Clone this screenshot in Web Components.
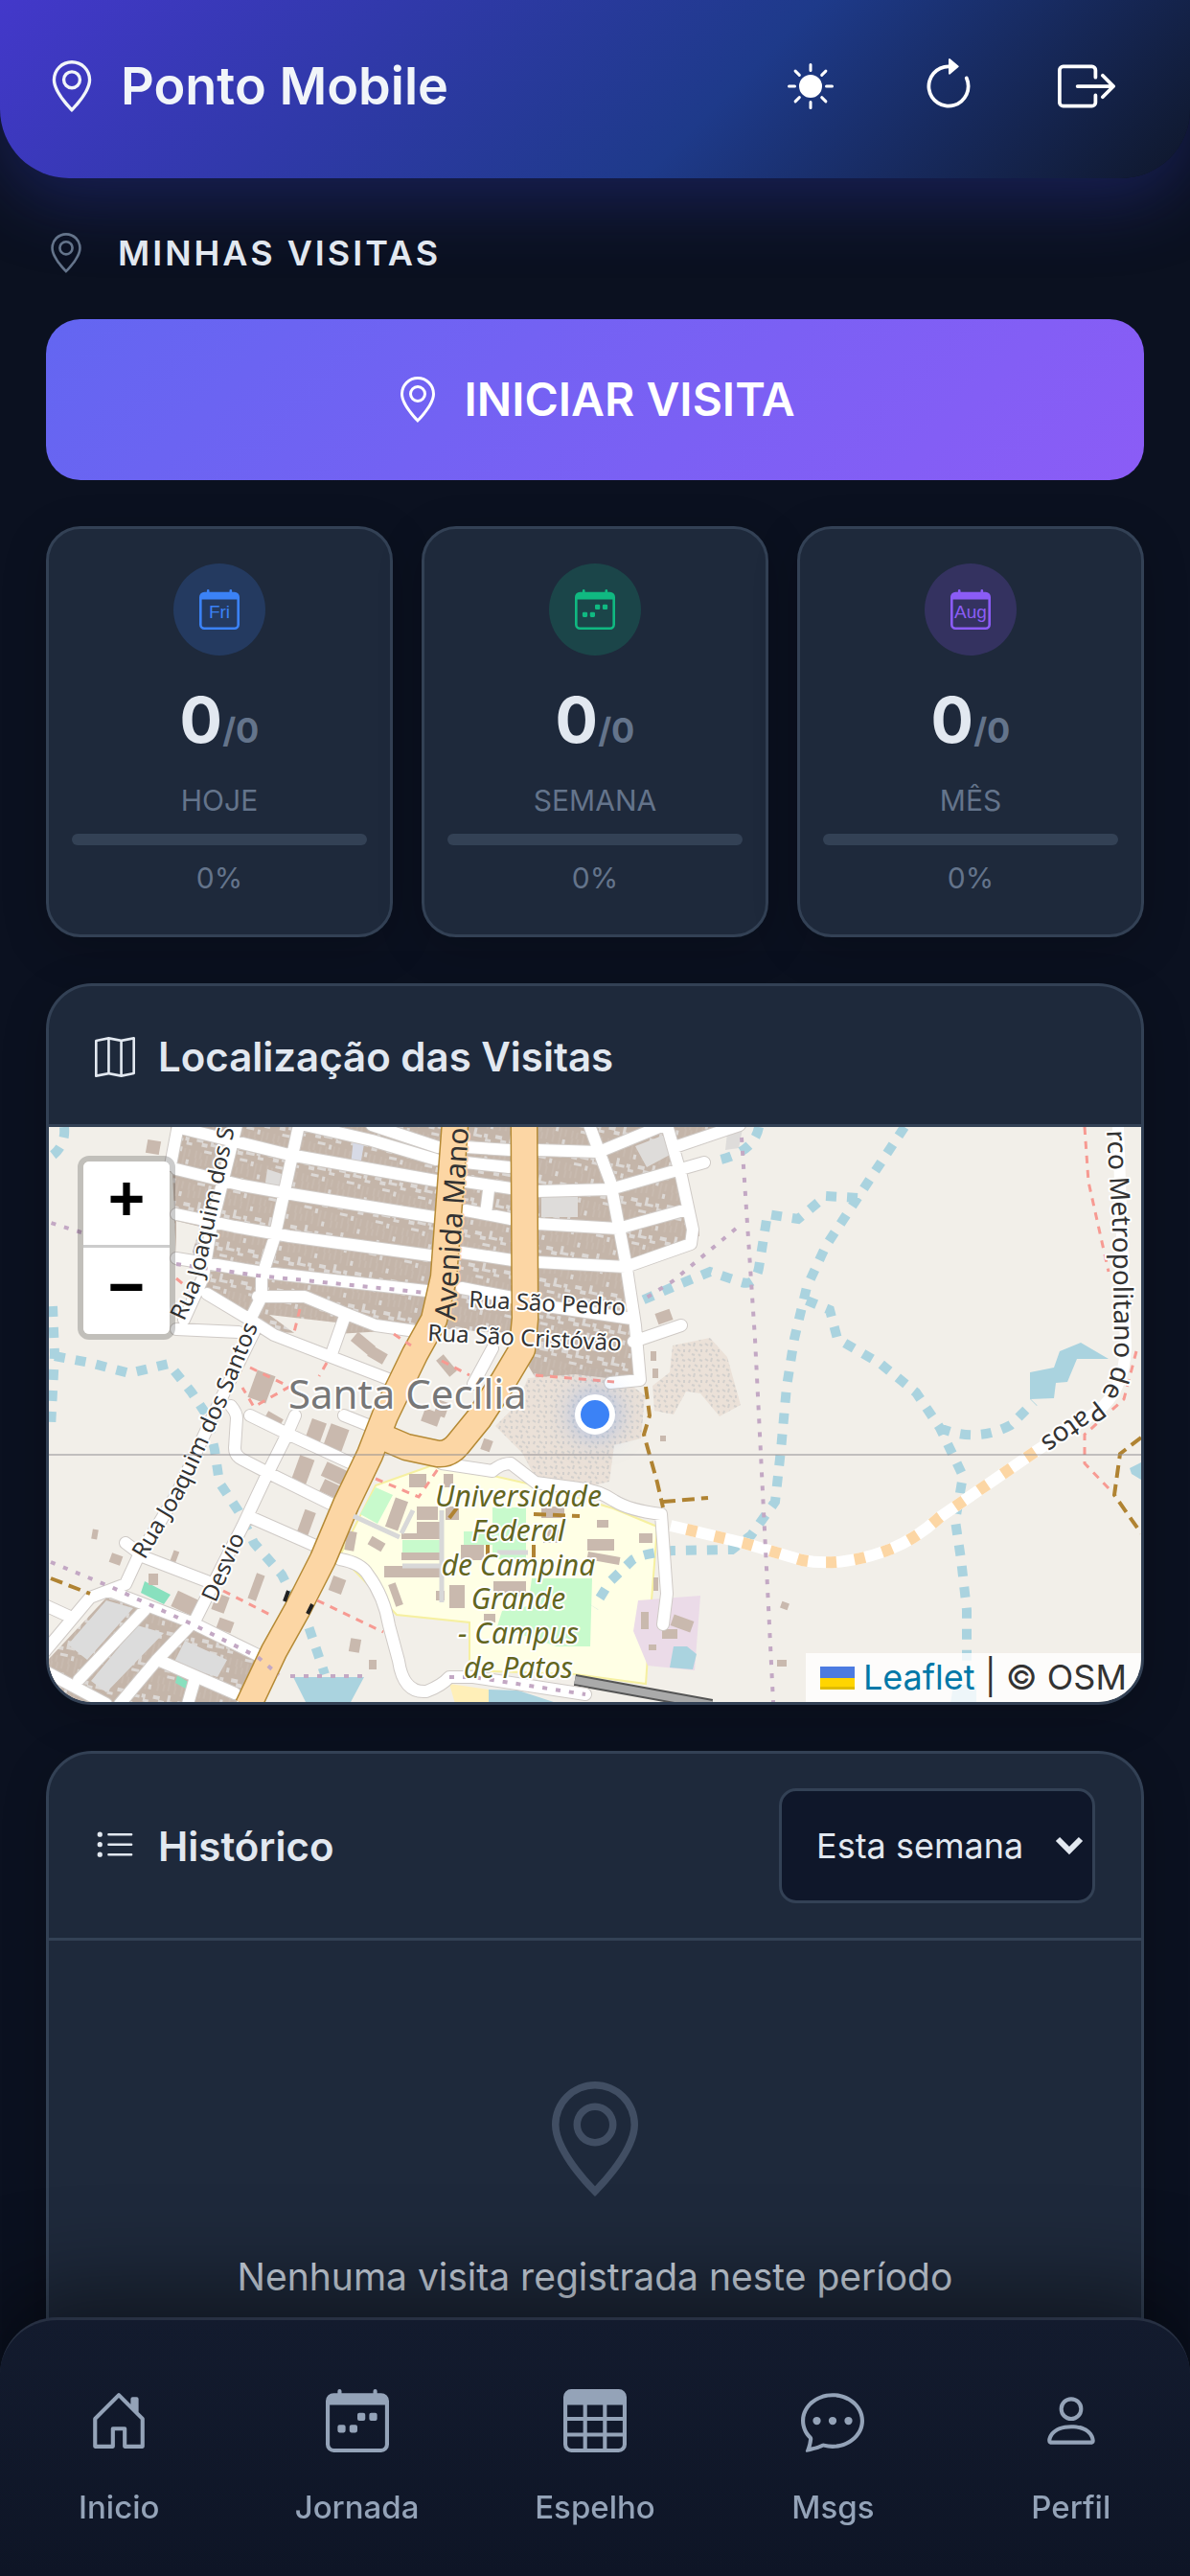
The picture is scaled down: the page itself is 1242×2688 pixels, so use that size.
<!DOCTYPE html>
<html lang="pt-BR">
<head>
<meta charset="utf-8">
<meta name="viewport" content="width=device-width, initial-scale=1">
<title>Ponto Mobile</title>
<style>
    :root {
        --bg: #0b1120;
        --card: #1e293b;
        --line: #334155;
        --text: #e2e8f0;
        --muted: #64748b;
    }
    body {
        margin: 0;
        background: var(--bg);
        color: var(--text);
        font-family: Inter, "Liberation Sans", sans-serif;
        font-size: 36px;
        line-height: 1.5;
        font-optical-sizing: none;
    }
    main {
        display: flex;
        flex-direction: column;
        padding: 51px 48px 117px;
    }
    section-title { margin-bottom: 42px; }
    visit-button, .stats, .map-panel { margin-bottom: 48px; }
    .stats {
        display: grid;
        grid-template-columns: repeat(3, 1fr);
        gap: 30px;
    }
</style>
</head>
<body>

<top-bar>Ponto Mobile</top-bar>

<main>
    <section-title icon="pin">Minhas Visitas</section-title>
    <visit-button>INICIAR VISITA</visit-button>

    <div class="stats">
        <stat-card icon="day" day="Fri" color="#3b82f6" tint="rgba(59,130,246,.2)" label="Hoje"></stat-card>
        <stat-card icon="week" color="#10b981" tint="rgba(16,185,129,.2)" label="Semana"></stat-card>
        <stat-card icon="day" day="Aug" color="#8b5cf6" tint="rgba(139,92,246,.2)" label="Mês"></stat-card>
    </div>

    <panel-card class="map-panel" icon="map">
        <span slot="title">Localização das Visitas</span>
        <visit-map></visit-map>
    </panel-card>

    <panel-card class="history-panel" icon="list">
        <span slot="title">Histórico</span>
        <period-select slot="action"></period-select>
        <empty-state>Nenhuma visita registrada neste período</empty-state>
    </panel-card>
</main>

<bottom-nav>
    <nav-item icon="home">Inicio</nav-item>
    <nav-item icon="week">Jornada</nav-item>
    <nav-item icon="table">Espelho</nav-item>
    <nav-item icon="chat">Msgs</nav-item>
    <nav-item icon="person">Perfil</nav-item>
</bottom-nav>

<script>
const icons = {
    pin: '<path d="M12.166 8.94c-.524 1.062-1.234 2.12-1.96 3.07A31.493 31.493 0 0 1 8 14.58a31.481 31.481 0 0 1-2.206-2.57c-.726-.95-1.436-2.008-1.96-3.07C3.304 7.867 3 6.862 3 6a5 5 0 0 1 10 0c0 .862-.305 1.867-.834 2.94zM8 16s6-5.686 6-10A6 6 0 0 0 2 6c0 4.314 6 10 6 10z"/><path d="M8 8a2 2 0 1 1 0-4 2 2 0 0 1 0 4zm0 1a3 3 0 1 0 0-6 3 3 0 0 0 0 6z"/>',
    sun: '<path d="M8 12a4 4 0 1 0 0-8 4 4 0 0 0 0 8zM8 0a.5.5 0 0 1 .5.5v2a.5.5 0 0 1-1 0v-2A.5.5 0 0 1 8 0zm0 13a.5.5 0 0 1 .5.5v2a.5.5 0 0 1-1 0v-2A.5.5 0 0 1 8 13zm8-5a.5.5 0 0 1-.5.5h-2a.5.5 0 0 1 0-1h2a.5.5 0 0 1 .5.5zM3 8a.5.5 0 0 1-.5.5h-2a.5.5 0 0 1 0-1h2A.5.5 0 0 1 3 8zm10.657-5.657a.5.5 0 0 1 0 .707l-1.414 1.415a.5.5 0 1 1-.707-.708l1.414-1.414a.5.5 0 0 1 .707 0zm-9.193 9.193a.5.5 0 0 1 0 .707L3.05 13.657a.5.5 0 0 1-.707-.707l1.414-1.414a.5.5 0 0 1 .707 0zm9.193 2.121a.5.5 0 0 1-.707 0l-1.414-1.414a.5.5 0 0 1 .707-.707l1.414 1.414a.5.5 0 0 1 0 .707zM4.464 4.465a.5.5 0 0 1-.707 0L2.343 3.05a.5.5 0 1 1 .707-.707l1.414 1.414a.5.5 0 0 1 0 .708z"/>',
    refresh: '<path fill-rule="evenodd" d="M8 3a5 5 0 1 0 4.546 2.914.5.5 0 0 1 .908-.417A6 6 0 1 1 8 2v1z"/><path d="M8 4.466V.534a.25.25 0 0 1 .41-.192l2.36 1.966c.12.1.12.284 0 .384L8.41 4.658A.25.25 0 0 1 8 4.466z"/>',
    logout: '<path fill-rule="evenodd" d="M10 12.5a.5.5 0 0 1-.5.5h-8a.5.5 0 0 1-.5-.5v-9a.5.5 0 0 1 .5-.5h8a.5.5 0 0 1 .5.5v2a.5.5 0 0 0 1 0v-2A1.5 1.5 0 0 0 9.5 2h-8A1.5 1.5 0 0 0 0 3.5v9A1.5 1.5 0 0 0 1.5 14h8a1.5 1.5 0 0 0 1.5-1.5v-2a.5.5 0 0 0-1 0v2z"/><path fill-rule="evenodd" d="M15.854 8.354a.5.5 0 0 0 0-.708l-3-3a.5.5 0 0 0-.708.708L14.293 7.5H5.5a.5.5 0 0 0 0 1h8.793l-2.147 2.146a.5.5 0 0 0 .708.708l3-3z"/>',
    day: '<path d="M3.5 0a.5.5 0 0 1 .5.5V1h8V.5a.5.5 0 0 1 1 0V1h1a2 2 0 0 1 2 2v11a2 2 0 0 1-2 2H2a2 2 0 0 1-2-2V3a2 2 0 0 1 2-2h1V.5a.5.5 0 0 1 .5-.5zM1 4v10a1 1 0 0 0 1 1h12a1 1 0 0 0 1-1V4H1z"/>',
    week: '<path d="M11 6.5a.5.5 0 0 1 .5-.5h1a.5.5 0 0 1 .5.5v1a.5.5 0 0 1-.5.5h-1a.5.5 0 0 1-.5-.5v-1zm-3 0a.5.5 0 0 1 .5-.5h1a.5.5 0 0 1 .5.5v1a.5.5 0 0 1-.5.5h-1a.5.5 0 0 1-.5-.5v-1zm-5 3a.5.5 0 0 1 .5-.5h1a.5.5 0 0 1 .5.5v1a.5.5 0 0 1-.5.5h-1a.5.5 0 0 1-.5-.5v-1zm3 0a.5.5 0 0 1 .5-.5h1a.5.5 0 0 1 .5.5v1a.5.5 0 0 1-.5.5h-1a.5.5 0 0 1-.5-.5v-1z"/><path d="M3.5 0a.5.5 0 0 1 .5.5V1h8V.5a.5.5 0 0 1 1 0V1h1a2 2 0 0 1 2 2v11a2 2 0 0 1-2 2H2a2 2 0 0 1-2-2V3a2 2 0 0 1 2-2h1V.5a.5.5 0 0 1 .5-.5zM1 4v10a1 1 0 0 0 1 1h12a1 1 0 0 0 1-1V4H1z"/>',
    map: '<path fill-rule="evenodd" d="M15.817.113A.5.5 0 0 1 16 .5v14a.5.5 0 0 1-.402.49l-5 1a.502.502 0 0 1-.196 0L5.5 15.01l-4.902.98A.5.5 0 0 1 0 15.5v-14a.5.5 0 0 1 .402-.49l5-1a.5.5 0 0 1 .196 0L10.5.99l4.902-.98a.5.5 0 0 1 .415.103zM10 1.91l-4-.8v12.98l4 .8V1.91zm1 12.98 4-.8V1.11l-4 .8v12.98zm-6-.8V1.11l-4 .8v12.98l4-.8z"/>',
    list: '<path fill-rule="evenodd" d="M5 11.5a.5.5 0 0 1 .5-.5h9a.5.5 0 0 1 0 1h-9a.5.5 0 0 1-.5-.5zm0-4a.5.5 0 0 1 .5-.5h9a.5.5 0 0 1 0 1h-9a.5.5 0 0 1-.5-.5zm0-4a.5.5 0 0 1 .5-.5h9a.5.5 0 0 1 0 1h-9a.5.5 0 0 1-.5-.5zm-3 1a1 1 0 1 0 0-2 1 1 0 0 0 0 2zm0 4a1 1 0 1 0 0-2 1 1 0 0 0 0 2zm0 4a1 1 0 1 0 0-2 1 1 0 0 0 0 2z"/>',
    home: '<path d="M8.354 1.146a.5.5 0 0 0-.708 0l-6 6A.5.5 0 0 0 1.5 7.5v7a.5.5 0 0 0 .5.5h4.5a.5.5 0 0 0 .5-.5v-4h2v4a.5.5 0 0 0 .5.5H14a.5.5 0 0 0 .5-.5v-7a.5.5 0 0 0-.146-.354L13 5.793V2.5a.5.5 0 0 0-.5-.5h-1a.5.5 0 0 0-.5.5v1.293L8.354 1.146zM2.5 14V7.707l5.5-5.5 5.5 5.5V14H10v-4a.5.5 0 0 0-.5-.5h-3a.5.5 0 0 0-.5.5v4H2.5z"/>',
    table: '<path d="M0 2a2 2 0 0 1 2-2h12a2 2 0 0 1 2 2v12a2 2 0 0 1-2 2H2a2 2 0 0 1-2-2V2zm15 2h-4v3h4V4zm0 4h-4v3h4V8zm0 4h-4v3h3a1 1 0 0 0 1-1v-2zm-5 3v-3H6v3h4zm-5 0v-3H1v2a1 1 0 0 0 1 1h3zm-4-4h4V8H1v3zm0-4h4V4H1v3zm5-3v3h4V4H6zm4 4H6v3h4V8z"/>',
    chat: '<path d="M5 8a1 1 0 1 1-2 0 1 1 0 0 1 2 0zm4 0a1 1 0 1 1-2 0 1 1 0 0 1 2 0zm3 1a1 1 0 1 0 0-2 1 1 0 0 0 0 2z"/><path d="m2.165 15.803.02-.004c1.83-.363 2.948-.842 3.468-1.105A9.06 9.06 0 0 0 8 15c4.418 0 8-3.134 8-7s-3.582-7-8-7-8 3.134-8 7c0 1.76.743 3.37 1.97 4.6a10.437 10.437 0 0 1-.524 2.318l-.003.011a10.722 10.722 0 0 1-.244.637c-.079.186.074.394.273.362a21.673 21.673 0 0 0 .693-.125zm.8-3.108a1 1 0 0 0-.287-.801C1.618 10.83 1 9.468 1 8c0-3.192 3.004-6 7-6s7 2.808 7 6c0 3.193-3.004 6-7 6a8.06 8.06 0 0 1-2.088-.272 1 1 0 0 0-.711.074c-.387.196-1.24.57-2.634.893a10.97 10.97 0 0 0 .398-2z"/>',
    person: '<path d="M8 8a3 3 0 1 0 0-6 3 3 0 0 0 0 6zm2-3a2 2 0 1 1-4 0 2 2 0 0 1 4 0zm4 8c0 1-1 1-1 1H3s-1 0-1-1 1-4 6-4 6 3 6 4zm-1-.004c-.001-.246-.154-.986-.832-1.664C11.516 10.68 10.289 10 8 10c-2.29 0-3.516.68-4.168 1.332-.678.678-.83 1.418-.832 1.664h10z"/>'
}

function icon(name, size) {
    return `<svg width="${size}" height="${size}" viewBox="0 0 16 16" fill="currentColor" aria-hidden="true">${icons[name]}</svg>`
}

class TopBar extends HTMLElement {
    constructor() {
        super()
        this.attachShadow({ mode: 'open' }).innerHTML = `
<style>
    :host {
        display: block;
        position: relative;
    }
    header {
        display: flex;
        align-items: center;
        justify-content: space-between;
        padding: 30px 48px 36px;
        background: linear-gradient(135deg, #4338ca 0%, #1e3a8a 60%, #0f172a 100%);
        border-radius: 0 0 72px 72px;
        box-shadow: 0 24px 72px rgba(45, 55, 170, .38);
        color: #fff;
    }
    h1 {
        display: flex;
        align-items: center;
        gap: 24px;
        margin: 0;
        color: #f1f5f9;
        font-size: 54px;
        line-height: 72px;
        font-weight: 600;
    }
    .actions {
        display: flex;
        gap: 24px;
    }
    button {
        display: grid;
        place-items: center;
        width: 120px;
        height: 120px;
        padding: 0;
        border: 0;
        background: none;
        color: inherit;
    }
</style>
<header>
    <h1>${icon('pin', 54)}<span><slot></slot></span></h1>
    <div class="actions">
        <button type="button" aria-label="Alternar tema">${icon('sun', 48)}</button>
        <button type="button" aria-label="Atualizar">${icon('refresh', 60)}</button>
        <button type="button" aria-label="Sair">${icon('logout', 60)}</button>
    </div>
</header>`
    }
}

class SectionTitle extends HTMLElement {
    constructor() {
        super()
        this.attachShadow({ mode: 'open' }).innerHTML = `
<style>
    :host { display: block; position: relative; }
    h2 {
        display: flex;
        align-items: center;
        gap: 33px;
        margin: 0;
        font-size: 36px;
        line-height: 54px;
        font-weight: 600;
        text-transform: uppercase;
        letter-spacing: 3px;
    }
    svg { color: var(--muted); }
</style>
<h2>${icon(this.getAttribute('icon'), 42)}<span><slot></slot></span></h2>`
    }
}

class VisitButton extends HTMLElement {
    constructor() {
        super()
        this.attachShadow({ mode: 'open' }).innerHTML = `
<style>
    :host { display: block; }
    button {
        display: flex;
        align-items: center;
        justify-content: center;
        gap: 24px;
        width: 100%;
        height: 168px;
        border: 0;
        border-radius: 36px;
        background: linear-gradient(135deg, #6366f1, #8b5cf6);
        color: #fff;
        font: inherit;
        font-size: 48px;
        line-height: 72px;
        font-weight: 600;
    }
</style>
<button type="button">${icon('pin', 48)}<span><slot></slot></span></button>`
    }
}

class StatCard extends HTMLElement {
    constructor() {
        super()
        const label = this.getAttribute('label')
        const day = this.getAttribute('day')
        this.attachShadow({ mode: 'open' }).innerHTML = `
<style>
    :host {
        display: flex;
        flex-direction: column;
        align-items: center;
        padding: 36px 24px;
        border: 3px solid var(--line);
        border-radius: 36px;
        background: var(--card);
        box-shadow: 0 12px 48px rgba(0, 0, 0, .2);
        color: var(--muted);
        font-size: 30px;
        line-height: 45px;
    }
    .badge {
        display: grid;
        place-items: center;
        width: 96px;
        height: 96px;
        margin-bottom: 18px;
        border-radius: 50%;
        background: ${this.getAttribute('tint')};
        color: ${this.getAttribute('color')};
    }
    .badge > * { grid-area: 1 / 1; }
    .day {
        padding-top: 6px;
        font: 19px/24px "Liberation Sans", sans-serif;
    }
    .count {
        margin-bottom: 12px;
        color: var(--text);
        font-size: 66px;
        line-height: 99px;
        font-weight: 700;
    }
    .count span {
        color: var(--muted);
        font-size: 36px;
        line-height: 54px;
    }
    .label { text-transform: uppercase; }
    .bar {
        align-self: stretch;
        height: 12px;
        margin: 12px 0;
        border-radius: 6px;
        background: var(--line);
    }
</style>
<div class="badge">${icon(this.getAttribute('icon'), 42)}${day ? `<span class="day">${day}</span>` : ''}</div>
<div class="count">0<span>/0</span></div>
<div class="label">${label}</div>
<div class="bar" role="progressbar" aria-label="${label}" aria-valuenow="0" aria-valuemin="0" aria-valuemax="100"></div>
<div>0%</div>`
    }
}

class PanelCard extends HTMLElement {
    constructor() {
        super()
        this.attachShadow({ mode: 'open' }).innerHTML = `
<style>
    :host {
        display: block;
        overflow: hidden;
        border: 3px solid var(--line);
        border-radius: 48px;
        background: var(--card);
        box-shadow: 0 12px 48px rgba(0, 0, 0, .2);
    }
    header {
        display: flex;
        align-items: center;
        justify-content: space-between;
        padding: 36px 48px;
        border-bottom: 3px solid var(--line);
    }
    :host(.map-panel) header { padding: 42px 48px 39px; }
    h3 {
        display: flex;
        align-items: center;
        gap: 24px;
        margin: 0;
        font-size: 42px;
        line-height: 63px;
        font-weight: 600;
    }
</style>
<header>
    <h3>${icon(this.getAttribute('icon'), 42)}<slot name="title"></slot></h3>
    <slot name="action"></slot>
</header>
<slot></slot>`
    }
}

const roads = [
    // blocks west of the avenue
    'M141 2 251 29 404 56', 'M267 -2 337 14 404 34', 'M337 -2 406 21',
    'M133 44 202 61 259 71 402 94', 'M133 91 194 104 251 114 398 134', 'M133 137 218 151 394 171',
    'M165 174 210 201 235 217 357 264', 'M218 177 267 177 308 194 341 207 390 214',
    'M261 -2 235 117 222 157 222 177 210 201', 'M135 -2 127 40', 'M196 -2 169 107 161 157 141 201',
    'M308 200 296 234', 'M133 211 198 214',
    // between the two main roads
    'M435 21 482 24', 'M435 37 480 42', 'M435 57 482 64', 'M435 87 482 96', 'M431 131 484 139', 'M431 168 484 178', 'M459 66 456 90',
    // east blocks
    'M510 24 574 26 647 -4', 'M510 67 586 65 684 37', 'M510 101 594 106 666 86', 'M510 141 602 146 670 122',
    'M564 -2 586 57 602 141 612 207 617 264 586 267', 'M645 -2 660 51 672 107 670 122', 'M653 21 721 -2', 'M610 224 660 207',
    'M506 185 608 200', 'M463 231 443 268',
    // south
    'M214 214 178 287 133 384 92 451 80 477 43 491 -4 547', 'M257 301 247 324 227 364 202 417 178 464 153 514 112 557 74 602',
    'M210 301 251 321 316 351', 'M190 291Q196 298 196 304L194 335Q194 343 202 347L231 362 296 394', 'M210 407 276 436',
    'M80 434 100 449 165 474', 'M63 484 149 517 222 553', 'M-2 500 22 511', 'M100 504 31 577', 'M-2 569 60 602',
    'M116 557 194 591', 'M153 574 145 602', 'M308 301 333 311',
    'M304 451Q326 455 333 467 350 490 355 520L365 557Q370 591 394 589 410 583 418 574L443 574 560 592',
    'M410 351 463 359Q472 351 482 351L508 371 553 377Q574 379 590 390 606 400 639 404L645 487 641 519'
]
const avenue = 'M424 -4 412 157 402 201 382 237 351 301 335 342 310 394 286 451 259 504 235 547 208 604'
const bypass = 'M496 -4 497 200 494 232 475 264 449 304 427 331Q418 342 406 341L373 334 345 322'
const streams = [
    'M893 0 844 74 811 124 791 167 778 221 770 271 764 337 758 391 733 426 713 441 651 442Q620 445 610 451L586 474 569 501',
    'M741 0Q736 28 692 36', 'M844 74 811 72 782 96 750 91 741 147Q737 168 720 161L690 151 651 167 619 181',
    'M791 181 815 191 823 221 868 247 905 277 930 314 954 364 946 411 952 451 958 504 958 557',
    'M930 314Q968 330 1004 311L1028 287', 'M16 0Q18 20 2 31', 'M4 187 6 237 2 314',
    'M6 239 43 246 84 257 125 247 149 277 165 301 173 337 178 371 198 401 214 434 243 467 271 521 288 571'
]
// x, y, width, height, rotation
const houses = [
    [212, 256, 20, 30, 20], [225, 300, 18, 12, 30], [270, 306, 16, 26, 20], [290, 312, 20, 24, 20],
    [256, 344, 16, 34, 20], [286, 354, 26, 16, 25], [284, 372, 26, 14, 25], [262, 400, 12, 30, 20],
    [212, 466, 9, 28, 20], [130, 488, 24, 18, 25], [172, 488, 14, 18, 20], [128, 442, 6, 14, 20],
    [104, 466, 10, 12, 0], [64, 446, 12, 10, 20], [45, 420, 6, 10, 10], [294, 470, 14, 16, 20],
    [314, 534, 11, 14, 10], [334, 556, 8, 10, 0], [176, 514, 16, 12, 20], [102, 14, 14, 14, 10],
    [316, 220, 24, 12, 40], [334, 232, 18, 12, 30], [404, 244, 22, 10, 50], [390, 296, 18, 14, 20],
    [404, 286, 12, 16, 20], [376, 362, 18, 14, 0], [452, 326, 10, 12, 20], [412, 362, 10, 14, 0],
    [356, 388, 14, 32, 20], [384, 396, 22, 14, 0], [384, 412, 26, 12, 0], [414, 396, 14, 14, 0],
    [430, 436, 24, 16, 0], [368, 424, 40, 6, 0], [368, 444, 40, 8, 0], [350, 458, 60, 12, 0],
    [334, 430, 16, 10, 30], [310, 422, 10, 20, 10], [418, 478, 16, 24, 0], [404, 484, 9, 10, 0],
    [358, 476, 8, 24, -20], [464, 474, 34, 16, 0], [514, 396, 24, 12, 0], [516, 420, 18, 14, 0],
    [562, 430, 28, 12, 0], [562, 446, 34, 8, 10], [572, 410, 12, 8, 0], [616, 424, 14, 10, 0],
    [618, 506, 8, 18, 0], [650, 512, 22, 12, 20], [640, 524, 16, 10, 0], [626, 540, 8, 6, 0],
    [764, 496, 8, 7, 20], [760, 556, 10, 7, 0], [638, 322, 6, 6, 0], [634, 192, 16, 12, -20],
    [628, 234, 6, 10, 0], [630, 252, 6, 10, 0], [673, 108, 6, 6, 0], [631, 470, 5, 14, 0], [454, 508, 12, 9, 0]
]

class VisitMap extends HTMLElement {
    constructor() {
        super()
        const lines = (list, attrs) => `<path d="${list.join('')}" ${attrs}/>`
        this.attachShadow({ mode: 'open' }).innerHTML = `
<style>
    :host {
        display: block;
        position: relative;
        height: 600px;
        background: #f2efe9;
    }
    .tiles {
        display: block;
        width: 100%;
        height: 100%;
    }
    text {
        fill: #333;
        stroke: #fff;
        stroke-width: 4px;
        stroke-linejoin: round;
        paint-order: stroke;
        font-family: "Noto Sans", sans-serif;
        font-size: 24px;
    }
    .avenue {
        stroke: #fcd6a4;
        font-size: 30px;
    }
    .place {
        fill: #777;
        font-size: 42px;
    }
    .campus {
        fill: #63661f;
        font-size: 30px;
        font-style: italic;
        text-anchor: middle;
    }
    .beltway { font-size: 28px; }
    .zoom {
        position: absolute;
        top: 30px;
        left: 30px;
        display: flex;
        flex-direction: column;
        border: 6px solid rgba(0, 0, 0, .2);
        border-radius: 12px;
        background-clip: padding-box;
    }
    .zoom button {
        box-sizing: border-box;
        width: 90px;
        height: 90px;
        padding: 0;
        border: 0;
        background: #fff;
        color: #000;
        font: bold 66px/87px "Liberation Mono", monospace;
    }
    .zoom button:first-child {
        border-bottom: 3px solid #ccc;
        border-radius: 6px 6px 0 0;
    }
    .zoom button:last-child { border-radius: 0 0 6px 6px; }
    .marker {
        position: absolute;
        top: 50%;
        left: 50%;
        width: 30px;
        height: 30px;
        margin: -21px;
        border: 6px solid #fff;
        border-radius: 50%;
        background: #3b82f6;
        box-shadow: 0 0 30px rgba(59, 130, 246, .5);
    }
    .credit {
        position: absolute;
        right: 0;
        bottom: 0;
        display: flex;
        align-items: center;
        padding: 0 15px;
        background: rgba(255, 255, 255, .8);
        color: #333;
        font-size: 36px;
        line-height: 51px;
        white-space: pre;
    }
    a {
        display: flex;
        align-items: center;
        gap: 9px;
        color: #0078a8;
        text-decoration: none;
    }
</style>
<svg class="tiles" viewBox="0 0 1140 600" preserveAspectRatio="xMidYMid slice" role="img" aria-label="Mapa das visitas">
    <defs>
        <pattern id="roofs" width="38" height="34" patternUnits="userSpaceOnUse" patternTransform="rotate(12)">
            <rect width="38" height="34" fill="#c4b5a9"/>
            <path d="M2 13h7v4h5v4H8v-4H2zM17 10h3v6h6v3h-9zM28 14h4v5h4v3h-6v-4h-2zM12 24h8v3h-8zM24 25h3v5h-3zM33 3h3v5h-3z" fill="#dcd8d5"/>
            <path d="M5 0v8M11 0v7M16 0v6M23 0v8M30 0v9M4 26v8M9 27v7M16 29v5M22 28v6M30 26v8M35 26v8" stroke="#cdc0b6"/>
        </pattern>
        <pattern id="scrub" width="18" height="16" patternUnits="userSpaceOnUse">
            <rect width="18" height="16" fill="#ebe1d8"/>
            <path d="M1 2l3 2M8 1l-1 4M13 3l3 1M3 8l-1 3M8 8l3 2M15 8v3M5 13l3 1M12 13l2 2" stroke="#d2cfcc" stroke-width="2"/>
        </pattern>
        <path id="street-n" d="M141 203 160 162 171 110 192 10 204 -60"/>
        <path id="street-s" d="M100 452 141 384 186 287 230 180"/>
        <path id="belt" d="M1104 4 1110 100 1112 225Q1113 270 1086 290L1026 332 960 378"/>
    </defs>

    <!-- land cover -->
    <path d="M127 0H718L655 28 672 118 606 152 617 262 508 262 480 215 402 210 300 216 230 214 165 174 133 137Z" fill="url(#roofs)"/>
    <path d="M63 488 149 520 218 555 195 602H0V555Z" fill="url(#roofs)"/>
    <path d="M133 98 158 104 150 130 165 174 133 150ZM230 196 300 204 330 240 270 225Z" fill="#f2efe9"/>
    <path d="M318 12h12l-5 28h-10z" fill="#d7dae6"/>
    <path d="M228 44l18 6-4 22h-18zM514 72h38v22h-38zM612 20l36-14 2 22-26 14zM708 6l16-4-4 20-14 2z" fill="#dedcda"/>
    <path d="M60 494 88 502 40 556 20 540ZM92 520 120 528 60 590 44 578ZM142 536 186 556 176 574 130 560Z" fill="#dcdcdc"/>
    <path d="M500 262 549 258 600 264 622 280 618 325 590 332 585 370 560 376 508 366 494 340 466 312 488 290Z" fill="url(#scrub)"/>
    <path d="M651 228 690 220 708 240 722 290 700 302 680 278 665 276 652 300 632 296 630 270 648 256Z" fill="url(#scrub)"/>
    <path d="M341 374 406 351 508 374 589 398 635 417 629 494 623 581 549 571 439 567 439 517 363 509 304 447Z" fill="#ffffe5" stroke="#f6f0a0" stroke-width="2"/>
    <path d="M341 376 359 384 343 414 325 404ZM463 397H498V451H463ZM433 422H463V436H433ZM504 471H567L565 542H530L468 521 473 505 500 500ZM369 431H410V444H369Z" fill="#c8facc"/>
    <path d="M100 474 127 488 120 498 96 486ZM134 572 150 582 146 588 132 580Z" fill="#88e0be"/>
    <path d="M615 494 680 489 674 567 625 562 610 526Z" fill="#ebdbe8"/>
    <path d="M418 581 459 587V602H424Z" fill="#ffefb8"/>
    <path d="M255 574H329L314 602H269ZM459 587 490 588 533 602H459ZM652 542h14l10 8-4 16-24-2zM944 582h24v20h-27zM1140 350l-12 6 2 6 10 6z" fill="#aad3df"/>
    <path d="M1024 256 1049 251 1055 234 1077 225 1106 242 1073 242 1063 266 1051 267 1049 283 1024 284Z" fill="#aad3df"/>
    <g fill="#c9b9ae">${houses.map(([x, y, w, h, r]) => `<rect x="${x}" y="${y}" width="${w}" height="${h}" transform="rotate(${r} ${x + w / 2} ${y + h / 2})"/>`).join('')}</g>

    <g fill="none">
        ${lines(streams, 'stroke="#aad3df" stroke-width="10" stroke-dasharray="11 11"')}
        <path d="M549 577 692 603" stroke="#555" stroke-width="12"/>
        <path d="M549 577 692 603" stroke="#aaa" stroke-width="8"/>
        <g stroke-linecap="round" stroke-linejoin="round">
            ${lines(roads, 'stroke="#cfcac6" stroke-width="14"')}
            ${lines(roads, 'stroke="#fff" stroke-width="12"')}
        </g>
        <g stroke-linejoin="round">
            ${lines([avenue, bypass], 'stroke="#b58a35" stroke-width="29"')}
            ${lines([avenue, bypass], 'stroke="#fcd6a4" stroke-width="26"')}
        </g>
        <path d="M318 406 366 428M368 424 380 400M410 400V496M468 444H500M369 458H410" stroke="#d8d8d8" stroke-width="5"/>
        <path d="M649 416 725 434 786 452Q827 460 877 441 905 430 930 407L1032 337 1094 297Q1122 275 1124 230L1116 0" stroke="#fff" stroke-width="12"/>
        <path d="M649 416 725 434 786 452Q827 460 877 441 905 430 930 407L1032 337" stroke="#fcd6a4" stroke-width="12" stroke-dasharray="11 19" stroke-dashoffset="-17"/>
        <path d="M723 11 737 221 756 600M717 106 651 161 619 181M133 143 218 155 394 173M2 454 65 480 150 519 218 553 240 572M418 574 443 574 560 592M34 110 2 100M252 573H330" stroke="#c3a8c4" stroke-width="4" stroke-dasharray="5 9"/>
        <path d="M1081 0 1085 57 1106 151M1135 234 1122 284 1081 321V351L1106 377M210 251 251 271 214 292 202 272M182 484 235 511M280 494 349 527M341 367 386 386 406 357M410 244 439 259M508 259 590 266M262 190 256 214M290 246 282 260M360 216 378 228M133 158 150 172" stroke="#f79a92" stroke-width="3" stroke-dasharray="8 7"/>
        <path d="M623 271 627 301 621 321 635 371 641 397M641 391 688 387M1140 324 1118 341 1112 384 1140 424M2 471 43 487M418 408 430 392M506 404 554 406M458 436V452M506 436V452" stroke="#b08332" stroke-width="4" stroke-dasharray="13 7"/>
        <path d="M250 484 246 495M275 498 270 508" stroke="#222" stroke-width="4"/>
    </g>

    <text class="avenue" transform="translate(424 202) rotate(-86)">Avenida Mano</text>
    <text transform="translate(438 188) rotate(3)">Rua São Pedro</text>
    <text transform="translate(395 223) rotate(3)">Rua São Cristóvão</text>
    <text><textPath href="#street-n">Rua Joaquim dos S</textPath></text>
    <text><textPath href="#street-s">Rua Joaquim dos Santos</textPath></text>
    <text transform="translate(174 497) rotate(-66)">Desvio</text>
    <text class="place" x="250" y="294">Santa Cecília</text>
    <text class="campus" x="490" y="396">Universidade<tspan x="490" y="432">Federal</tspan><tspan x="490" y="468">de Campina</tspan><tspan x="490" y="503">Grande</tspan><tspan x="490" y="539">- Campus</tspan><tspan x="490" y="575">de Patos</tspan></text>
    <text class="beltway"><textPath href="#belt">rco Metropolitano de Patos</textPath></text>
    <path d="M0 342H1140" stroke="#8f8d92"/>
</svg>
<div class="zoom">
    <button type="button" aria-label="Aproximar">+</button>
    <button type="button" aria-label="Afastar">−</button>
</div>
<div class="marker"></div>
<div class="credit"><a href="#leaflet"><svg width="36" height="24" viewBox="0 0 12 8" aria-hidden="true"><path fill="#4c7be1" d="M0 0h12v4H0z"/><path fill="#ffd500" d="M0 4h12v3H0z"/><path fill="#e0bc00" d="M0 7h12v1H0z"/></svg>Leaflet</a><span> | © OSM</span></div>`
    }
}

class PeriodSelect extends HTMLElement {
    constructor() {
        super()
        this.attachShadow({ mode: 'open' }).innerHTML = `
<style>
    :host {
        display: grid;
        align-items: center;
    }
    select, svg { grid-area: 1 / 1; }
    select {
        box-sizing: border-box;
        width: 330px;
        height: 120px;
        padding: 0 36px;
        border: 3px solid var(--line);
        border-radius: 18px;
        appearance: none;
        background: #0f172a;
        color: var(--text);
        font: inherit;
        font-size: 36px;
        line-height: 54px;
    }
    svg {
        justify-self: end;
        margin-right: 12px;
        pointer-events: none;
    }
</style>
<select aria-label="Período">
    <option>Hoje</option>
    <option selected>Esta semana</option>
    <option>Este mês</option>
</select>
<svg width="30" height="24" viewBox="0 0 30 24" fill="none" stroke="#e2e8f0" stroke-width="6" aria-hidden="true"><path d="M3 5 15 17 27 5"/></svg>`
    }
}

class EmptyState extends HTMLElement {
    constructor() {
        super()
        this.attachShadow({ mode: 'open' }).innerHTML = `
<style>
    :host {
        display: flex;
        flex-direction: column;
        align-items: center;
        gap: 54px;
        padding: 147px 48px;
        font-size: 39px;
        line-height: 60px;
        color: #cbd5e1;
    }
    svg {
        color: var(--muted);
        opacity: .5;
    }
    p { margin: 0; }
</style>
${icon('pin', 120)}
<p><slot></slot></p>`
    }
}

class BottomNav extends HTMLElement {
    constructor() {
        super()
        this.attachShadow({ mode: 'open' }).innerHTML = `
<style>
    :host {
        display: block;
        position: fixed;
        right: 0;
        bottom: 0;
        left: 0;
    }
    nav {
        display: grid;
        grid-auto-flow: column;
        grid-auto-columns: 1fr;
        padding: 72px 0 48px;
        border-top: 3px solid #273042;
        border-radius: 60px 60px 0 0;
        background: linear-gradient(#131b2e, #0e1526);
        box-shadow: 0 -24px 96px rgba(0, 0, 0, .5);
    }
</style>
<nav aria-label="Principal"><slot></slot></nav>`
    }
}

class NavItem extends HTMLElement {
    constructor() {
        super()
        this.attachShadow({ mode: 'open' }).innerHTML = `
<style>
    :host { display: block; }
    a {
        display: flex;
        flex-direction: column;
        align-items: center;
        gap: 33px;
        color: #94a3b8;
        font-size: 33px;
        line-height: 48px;
        font-weight: 500;
        text-decoration: none;
    }
</style>
<a href="#${this.getAttribute('icon')}">${icon(this.getAttribute('icon'), 66)}<span><slot></slot></span></a>`
    }
}

window.customElements.define('top-bar', TopBar)
window.customElements.define('section-title', SectionTitle)
window.customElements.define('visit-button', VisitButton)
window.customElements.define('stat-card', StatCard)
window.customElements.define('panel-card', PanelCard)
window.customElements.define('visit-map', VisitMap)
window.customElements.define('period-select', PeriodSelect)
window.customElements.define('empty-state', EmptyState)
window.customElements.define('bottom-nav', BottomNav)
window.customElements.define('nav-item', NavItem)
</script>
</body>
</html>
